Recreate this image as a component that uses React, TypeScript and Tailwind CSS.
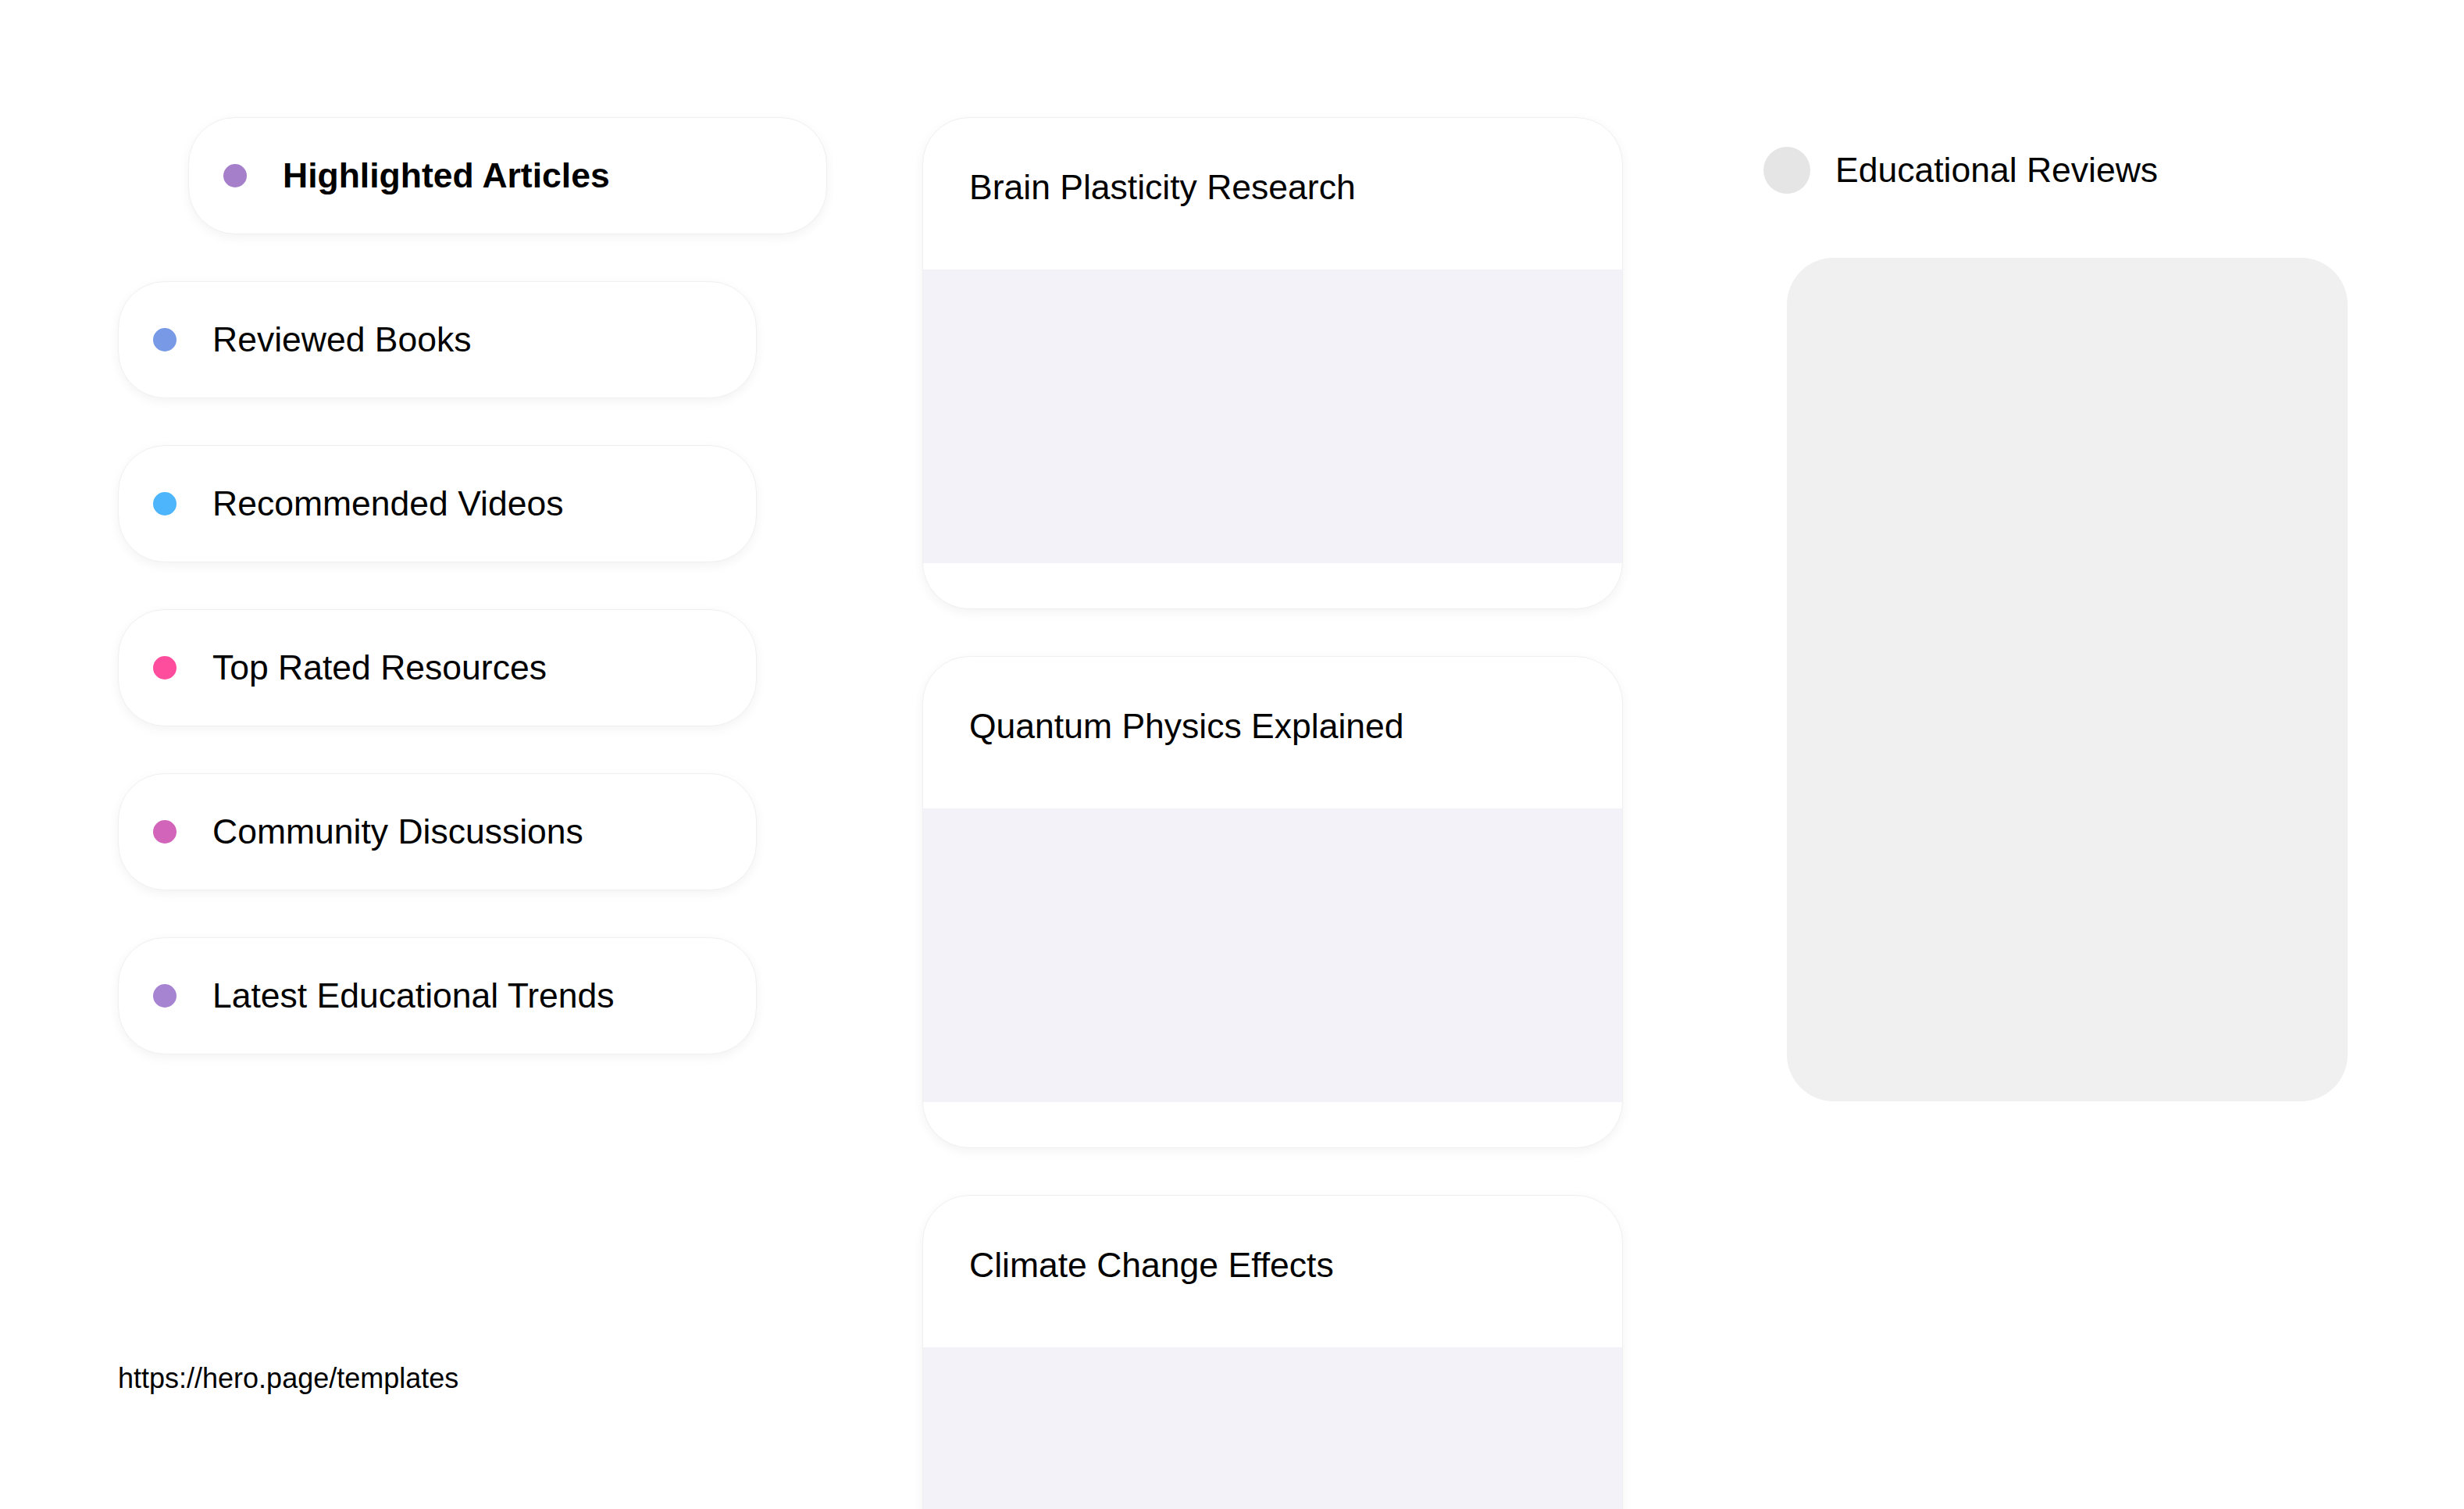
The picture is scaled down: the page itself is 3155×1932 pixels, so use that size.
import React from "react";

type NavItem = {
  label: string;
  color: string;
  active?: boolean;
};

const NAV_ITEMS: NavItem[] = [
  { label: "Highlighted Articles", color: "bg-[#a57fca]", active: true },
  { label: "Reviewed Books", color: "bg-[#7799e6]" },
  { label: "Recommended Videos", color: "bg-[#4cb5fb]" },
  { label: "Top Rated Resources", color: "bg-[#ff4d9e]" },
  { label: "Community Discussions", color: "bg-[#d264b9]" },
  { label: "Latest Educational Trends", color: "bg-[#a684d2]" },
];

const ARTICLES = [
  "Brain Plasticity Research",
  "Quantum Physics Explained",
  "Climate Change Effects",
];

function NavCard({ item }: { item: NavItem }) {
  return (
    <div
      className={`flex h-[150px] w-[818px] items-center gap-[46px] rounded-[60px] border border-[#f0f0f0] bg-white pl-[44px] shadow-[0_4px_14px_rgba(0,0,0,0.05)] ${
        item.active ? "ml-[90px]" : ""
      }`}
    >
      <span className={`h-[30px] w-[30px] shrink-0 rounded-full ${item.color}`} />
      <span
        className={`text-[44.5px] text-black ${item.active ? "font-bold" : "font-normal"}`}
      >
        {item.label}
      </span>
    </div>
  );
}

function ArticleCard({ title }: { title: string }) {
  return (
    <div className="w-[897px] shrink-0 overflow-hidden rounded-[60px] border border-[#f0f0f0] bg-white pb-[58px] shadow-[0_4px_14px_rgba(0,0,0,0.05)]">
      <div className="h-[194px] pl-[59px] pt-[64px]">
        <h2 className="text-[44.5px] font-normal leading-[50px] text-black">{title}</h2>
      </div>
      <div className="h-[376px] bg-[#f4f2f9]" />
    </div>
  );
}

export default function App() {
  return (
    <div className="flex min-h-screen bg-white pl-[151px] pt-[150px] font-['Liberation_Sans',Arial,sans-serif]">
      {/* nav column */}
      <div className="flex w-[908px] shrink-0 flex-col">
        <div className="flex flex-col gap-[60px]">
          {NAV_ITEMS.map((item) => (
            <NavCard key={item.label} item={item} />
          ))}
        </div>
        <a href="#" className="mt-[388px] text-[36px] text-black">
          https://hero.page/templates
        </a>
      </div>

      {/* articles */}
      <div className="ml-[122px] flex flex-col gap-[60px]">
        {ARTICLES.map((title) => (
          <ArticleCard key={title} title={title} />
        ))}
      </div>

      {/* reviews */}
      <div className="ml-[180px] flex flex-col pt-[38px]">
        <div className="flex h-[60px] items-center gap-[32px]">
          <span className="h-[60px] w-[60px] rounded-full bg-[#e5e5e5]" />
          <span className="text-[44.5px] text-black">Educational Reviews</span>
        </div>
        <div className="ml-[30px] mt-[82px] h-[1080px] w-[718px] rounded-[60px] bg-[#f0f0f0]" />
      </div>
    </div>
  );
}
